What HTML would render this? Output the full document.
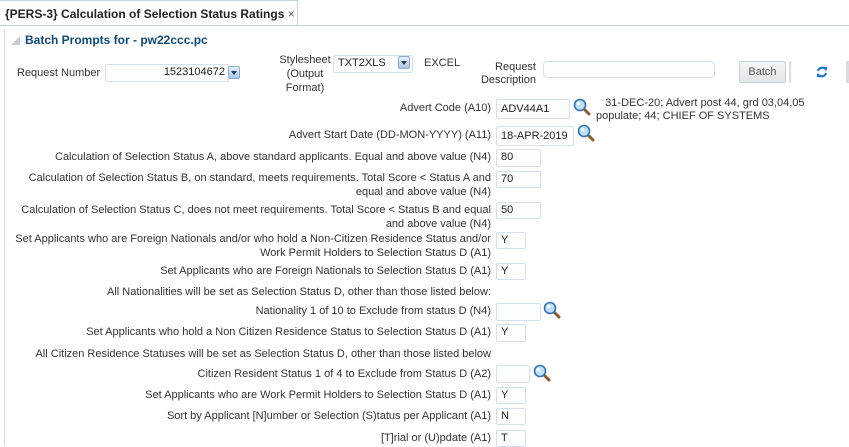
<!DOCTYPE html>
<html><head><meta charset="utf-8"><style>
*{margin:0;padding:0;box-sizing:border-box}
body{width:849px;height:446px;overflow:hidden;background:#fff;font-family:"Liberation Sans",Tahoma,sans-serif;font-size:11px;color:#333;position:relative}
.a{position:absolute;white-space:nowrap;line-height:13px}
.l{position:absolute;white-space:nowrap;line-height:13.5px;text-align:right;right:358px}
.in{position:absolute;border:1px solid #d6e0ea;background:#fcfdfe;border-radius:2px;padding-left:4px;line-height:15px;font-size:11px;color:#222}
.mg{position:absolute;width:18px;height:18px}
.dd{position:absolute;width:12px;height:13px;background:linear-gradient(#e6f0fb,#a9c6e6);border:1px solid #8eaccf;border-radius:2px}
.dd:after{content:"";position:absolute;left:2px;top:4px;border-left:3px solid transparent;border-right:3px solid transparent;border-top:4px solid #1c3c66}
</style></head><body>
<div style="position:absolute;left:0;top:0;width:298px;height:26px;border:1px solid #c8d3de;border-bottom:none;border-left:none;background:#fff"></div>
<div style="position:absolute;left:0;top:25px;width:849px;height:1px;background:#c8d3de"></div>
<div style="position:absolute;left:298px;top:25px;width:551px;height:1px;background:#c8d3de"></div>
<div class="a" style="left:5px;top:8px;font-weight:bold;font-size:12px;color:#222">{PERS-3} Calculation of Selection Status Ratings <span style="font-weight:normal;color:#555">×</span></div>
<div style="position:absolute;left:4px;top:30px;width:1px;height:416px;background:#d0dae4"></div>
<div style="position:absolute;left:11px;top:36px;width:0;height:0;border-left:9px solid transparent;border-bottom:9px solid #c5cdd6"></div>
<div class="a" style="left:25px;top:34px;font-weight:bold;font-size:12px;color:#0e4a7a">Batch Prompts for - pw22ccc.pc</div>

<div class="a" style="left:17px;top:67px">Request Number</div>
<div class="in" style="left:105px;top:64px;width:124px;height:18px;text-align:right;padding-right:3px">1523104672</div>
<div class="dd" style="left:228px;top:66px"></div>
<div class="a" style="left:270px;top:53px;text-align:center;width:70px;line-height:14px">Stylesheet<br>(Output<br>Format)</div>
<div class="in" style="left:333px;top:55px;width:80px;height:18px">TXT2XLS</div>
<div class="dd" style="left:398px;top:56px"></div>
<div class="a" style="left:424px;top:57px">EXCEL</div>
<div class="a" style="left:466px;top:61px;width:70px;text-align:right;line-height:13px">Request<br>Description</div>
<div class="in" style="left:543px;top:61px;width:172px;height:17px;border-radius:4px"></div>
<div style="position:absolute;left:739px;top:61px;width:47px;height:22px;border:1px solid #c9cfd6;background:linear-gradient(#f4f5f7,#e2e5e9);border-radius:2px;text-align:center;line-height:20px;color:#555">Batch</div>
<div style="position:absolute;left:789px;top:61px;width:2px;height:22px;background:#d8dde2"></div>
<svg style="position:absolute;left:815px;top:65px" width="14" height="14" viewBox="0 0 14 14"><path d="M3 6 A4.5 4.5 0 0 1 10.5 4" stroke="#1a75d2" stroke-width="2.2" fill="none"/><path d="M8.5 1.5 L12.5 2.5 L11 6.5Z" fill="#1a75d2"/><path d="M11 8 A4.5 4.5 0 0 1 3.5 10" stroke="#1a75d2" stroke-width="2.2" fill="none"/><path d="M5.5 12.5 L1.5 11.5 L3 7.5Z" fill="#1a75d2"/></svg>
<div style="position:absolute;left:846px;top:61px;width:3px;height:22px;background:#d8dde2"></div>

<svg width="0" height="0" style="position:absolute"><defs><symbol id="m" viewBox="0 0 18 18"><line x1="10" y1="10" x2="16" y2="16" stroke="#8a5a2b" stroke-width="3" stroke-linecap="round"/><circle cx="7" cy="7" r="5.5" fill="#bfe0f6" stroke="#2e74b5" stroke-width="1.6"/><circle cx="5.5" cy="5.5" r="1.8" fill="#fff" opacity=".8"/></symbol></defs></svg>

<div class="l" style="top:102px">Advert Code (A10)</div>
<div class="in" style="left:496px;top:99px;width:74px;height:20px;line-height:18px">ADV44A1</div>
<svg class="mg" style="left:573px;top:98px"><use href="#m"/></svg>
<div class="a" style="left:596px;top:97px;line-height:13px">&nbsp;&nbsp;&nbsp;31-DEC-20; Advert post 44, grd 03,04,05<br>populate; 44; CHIEF OF SYSTEMS</div>

<div class="l" style="top:129px">Advert Start Date (DD-MON-YYYY) (A11)</div>
<div class="in" style="left:496px;top:126px;width:78px;height:20px;line-height:18px">18-APR-2019</div>
<svg class="mg" style="left:577px;top:124px"><use href="#m"/></svg>

<div class="l" style="top:151px">Calculation of Selection Status A, above standard applicants. Equal and above value (N4)</div>
<div class="in" style="left:496px;top:149px;width:45px;height:18px">80</div>

<div class="l" style="top:172px">Calculation of Selection Status B, on standard, meets requirements. Total Score &lt; Status A and<br>equal and above value (N4)</div>
<div class="in" style="left:496px;top:171px;width:45px;height:17px">70</div>

<div class="l" style="top:204px">Calculation of Selection Status C, does not meet requirements. Total Score &lt; Status B and equal<br>and above value (N4)</div>
<div class="in" style="left:496px;top:202px;width:45px;height:17px">50</div>

<div class="l" style="top:233px">Set Applicants who are Foreign Nationals and/or who hold a Non-Citizen Residence Status and/or<br>Work Permit Holders to Selection Status D (A1)</div>
<div class="in" style="left:496px;top:232px;width:30px;height:17px">Y</div>

<div class="l" style="top:265px">Set Applicants who are Foreign Nationals to Selection Status D (A1)</div>
<div class="in" style="left:496px;top:263px;width:30px;height:17px">Y</div>

<div class="l" style="top:286px">All Nationalities will be set as Selection Status D, other than those listed below:</div>

<div class="l" style="top:305px">Nationality 1 of 10 to Exclude from status D (N4)</div>
<div class="in" style="left:496px;top:303px;width:45px;height:18px"></div>
<svg class="mg" style="left:543px;top:301px"><use href="#m"/></svg>

<div class="l" style="top:326px">Set Applicants who hold a Non Citizen Residence Status to Selection Status D (A1)</div>
<div class="in" style="left:496px;top:324px;width:30px;height:18px">Y</div>

<div class="l" style="top:348px">All Citizen Residence Statuses will be set as Selection Status D, other than those listed below</div>

<div class="l" style="top:368px">Citizen Resident Status 1 of 4 to Exclude from Status D (A2)</div>
<div class="in" style="left:496px;top:365px;width:34px;height:18px"></div>
<svg class="mg" style="left:533px;top:364px"><use href="#m"/></svg>

<div class="l" style="top:389px">Set Applicants who are Work Permit Holders to Selection Status D (A1)</div>
<div class="in" style="left:496px;top:387px;width:30px;height:17px">Y</div>

<div class="l" style="top:410px">Sort by Applicant [N]umber or Selection (S)tatus per Applicant (A1)</div>
<div class="in" style="left:496px;top:408px;width:30px;height:17px">N</div>

<div class="l" style="top:432px">[T]rial or (U)pdate (A1)</div>
<div class="in" style="left:496px;top:430px;width:30px;height:17px">T</div>
</body></html>
